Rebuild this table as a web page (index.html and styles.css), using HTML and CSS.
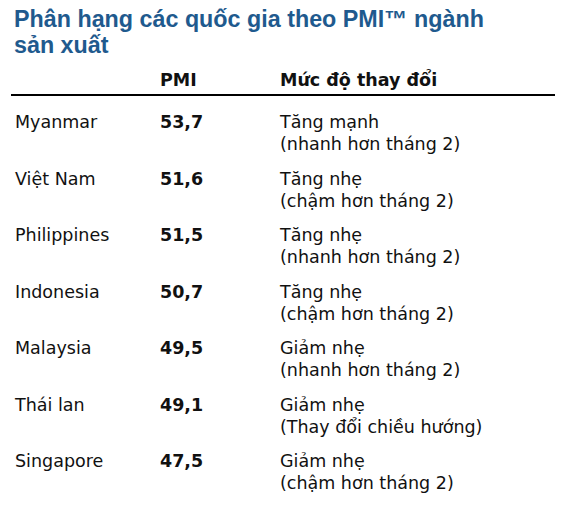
FILE: index.html
```html
<!DOCTYPE html>
<html lang="vi">
<head>
  <meta charset="UTF-8">
  <title>Phân hạng PMI ngành sản xuất</title>
  <link rel="stylesheet" href="styles.css">
</head>
<body>

  <h1 class="title">Phân hạng các quốc gia theo PMI™ ngành sản xuất</h1>

  <div class="pmi-table">
    <div class="row head">
      <span></span>
      <span class="num">PMI</span>
      <span>Mức độ thay đổi</span>
    </div>

    <div class="row">
      <span>Myanmar</span>
      <span class="num">53,7</span>
      <span>Tăng mạnh<br>(nhanh hơn tháng 2)</span>
    </div>
    <div class="row">
      <span>Việt Nam</span>
      <span class="num">51,6</span>
      <span>Tăng nhẹ<br>(chậm hơn tháng 2)</span>
    </div>
    <div class="row">
      <span>Philippines</span>
      <span class="num">51,5</span>
      <span>Tăng nhẹ<br>(nhanh hơn tháng 2)</span>
    </div>
    <div class="row">
      <span>Indonesia</span>
      <span class="num">50,7</span>
      <span>Tăng nhẹ<br>(chậm hơn tháng 2)</span>
    </div>
    <div class="row">
      <span>Malaysia</span>
      <span class="num">49,5</span>
      <span>Giảm nhẹ<br>(nhanh hơn tháng 2)</span>
    </div>
    <div class="row">
      <span>Thái lan</span>
      <span class="num">49,1</span>
      <span>Giảm nhẹ<br>(Thay đổi chiều hướng)</span>
    </div>
    <div class="row">
      <span>Singapore</span>
      <span class="num">47,5</span>
      <span>Giảm nhẹ<br>(chậm hơn tháng 2)</span>
    </div>
  </div>

</body>
</html>
```

FILE: styles.css
```css
body {
  margin: 0;
  padding: 7px 11px 0 11px;
  background-color: #fff;
  color: #111;
  font-family: "DejaVu Sans", Verdana, sans-serif;
}
.title {
  margin: 0 0 0 3px;
  width: 490px;
  font-family: "Liberation Sans", Arial, sans-serif;
  font-size: 23.3px;
  line-height: 25.5px;
  font-weight: bold;
  color: #1f5a8e;
}
.pmi-table {
  width: 544px;
  margin-top: 11px;
}
.row {
  display: grid;
  grid-template-columns: 145px 120px 1fr;
  padding-left: 4px;
  font-size: 17.5px;
  line-height: 22px;
  margin-bottom: 12.5px;
}
.row.head {
  font-weight: bold;
  padding-bottom: 3px;
  border-bottom: 2px solid #000;
  margin-bottom: 15px;
}
.num {
  font-weight: bold;
}
```
